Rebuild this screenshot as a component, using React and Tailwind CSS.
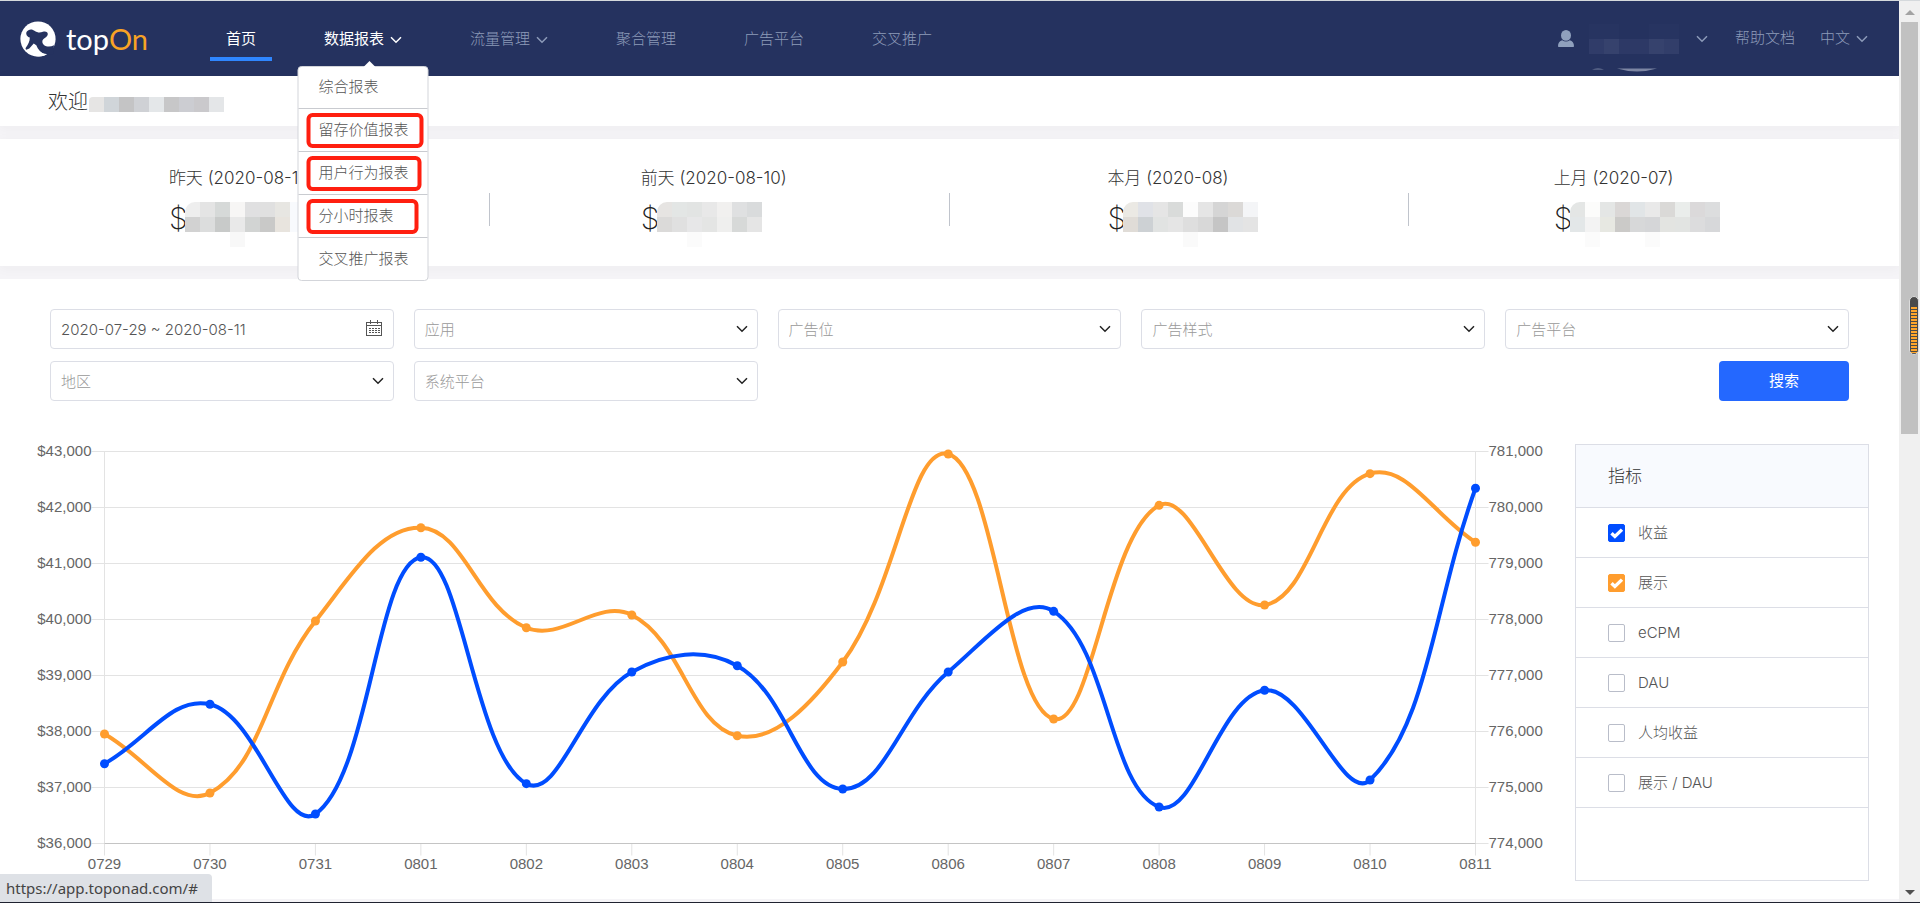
import { useLayoutEffect, useRef, useState } from "react";
import clsx from "clsx";

const navItems = [
  { label: "首页", active: true },
  { label: "数据报表", open: true, arrow: true },
  { label: "流量管理", arrow: true },
  { label: "聚合管理" },
  { label: "广告平台" },
  { label: "交叉推广" },
];

const reportMenu = [
  { label: "综合报表" },
  { label: "留存价值报表", mark: "w-[117px]" },
  { label: "用户行为报表", mark: "w-[115px]" },
  { label: "分小时报表", mark: "w-[112px]" },
  { label: "交叉推广报表" },
];

const summary = [
  {
    label: "昨天 (2020-08-11)",
    width: "w-[182px]",
    cells: [
      ["#eeeeee", "#e4e4e4", "#d6d9d8", "#f7f6f5", "#e0e0e1", "#e0e0e0", "#e7e6e2", "#f8fafd"],
      ["#d2d2d2", "#dcdddd", "#c8cac9", "#e9e9e9", "#d2d4d3", "#c9c9c8", "#e8e4de", "#f8fafd"],
      [null, null, null, "#f8f8f8"],
    ],
  },
  {
    label: "前天 (2020-08-10)",
    width: "w-[158px]",
    cells: [
      ["#e6e4e2", "#e3e6e5", "#e2e4e3", "#e8e8e8", "#f1f0ef", "#dfe0e1", "#d9dbdc"],
      ["#dbdad9", "#e0e0e0", "#e7e7e8", "#e4e5e4", "#efefee", "#d7d9d8", "#e5e5e5"],
      [null, null, "#fbfbfb"],
    ],
  },
  {
    label: "本月 (2020-08)",
    width: "w-[144px]",
    cells: [
      ["#ebe9e4", "#e0e2e7", "#e5e5e5", "#d9dbda", "#fcfcfc", "#e5e5e5", "#d5d5d5", "#dbd9d7", "#f4f5f7"],
      ["#e0dcd7", "#cdd1d4", "#e1e3e2", "#e5e5e5", "#dedede", "#d8d8d8", "#c5c5c5", "#e1e3e5", "#e4e4e4"],
      [null, null, null, null, "#fafafa"],
    ],
  },
  {
    label: "上月 (2020-07)",
    width: "w-[171px]",
    cells: [
      ["#e4e6e5", "#fcfcfb", "#e4e6e5", "#dad7d6", "#e1e5e7", "#e9e9e9", "#dad9d7", "#eaedeb", "#dbd9da", "#dcddde"],
      ["#e3e7e8", "#f3f3f3", "#e7e8e2", "#cbcac8", "#d7d8d9", "#d5d6d8", "#e3e4e1", "#e2e4e2", "#dcdcdd", "#d7d8da"],
      [null, "#fbfbfb", null, null, null, "#fbfbfb"],
    ],
  },
];

const metrics = [
  { label: "收益", checked: true, color: "bg-[#004dff] border-[#004dff]" },
  { label: "展示", checked: true, color: "bg-[#ff9d2e] border-[#ff9d2e]" },
  { label: "eCPM" },
  { label: "DAU" },
  { label: "人均收益" },
  { label: "展示 / DAU" },
];

const days = [
  "0729", "0730", "0731", "0801", "0802", "0803", "0804",
  "0805", "0806", "0807", "0808", "0809", "0810", "0811",
];
const revenue = [37425, 38486, 36527, 41111, 37068, 39063, 39175, 36973, 39063, 40146, 36652, 38736, 37134, 42343];
const impressions = [
  775955, 774902, 777973, 779639, 777853, 778080, 775925,
  777241, 780955, 776223, 780039, 778259, 780604, 779379,
];

const Chevron = ({ className }) => (
  <svg viewBox="0 0 12 8" className={clsx("h-2 w-3 fill-none stroke-current", className)} strokeWidth="1.5">
    <path d="M1 1.2 6 6.2 11 1.2" />
  </svg>
);

const Logo = () => (
  <a href="#" aria-label="topOn" className="flex items-center gap-2.5">
    <svg viewBox="0 0 36 36" className="size-9">
      <circle cx="18" cy="18" r="17.6" fill="#fff" />
      <path
        d="M6.500 11c1.800-3 5.600-3.400 8.400-1 2.600 1.800 5.200 1.800 8 .8 2.800-.8 5 .2 4.900 2.400-.2 2.200-2.600 3.600-4.300 4.700-1.800 1.500-1.500 4.200.4 6 2.400 2 6.400 2.400 10.100.4L33 33l-7.500.6c-4.200-1.800-7.800-5-9.200-9.400l-2.600-1.800-4.400 5.200-3 1.200c-.8-.6-.9-1.300-.5-2 2.400-3.300 4.100-6.600 4-10.200C7.200 15.800 5.600 13.400 6.500 11Z"
        fill="#25325f"
      />
      <path d="M16.500 27c2.300 4 5.800 6.200 10.500 6-4 3-9.500 3-13.500 1.500Z" fill="#fff" />
    </svg>
    <span className="font-[Lato] text-[29px] font-normal leading-9 text-white">
      top<span className="text-[#f7a325]">On</span>
    </span>
  </a>
);

const Mosaic = ({ cells, size = 15, radius = 10 }) => {
  const cols = Math.max(...cells.map((row) => row.length));
  return (
    <svg
      width={cols * size}
      height={cells.length * size}
      className="shrink-0"
      shapeRendering="crispEdges"
      aria-hidden="true"
      style={{ borderTopLeftRadius: radius }}
    >
      {cells.map((row, y) =>
        row.map((fill, x) =>
          fill ? <rect key={`${x}-${y}`} x={x * size} y={y * size} width={size} height={size} fill={fill} /> : null
        )
      )}
    </svg>
  );
};

const ReportMenu = () => (
  <div className="absolute left-1/2 top-full z-20 mt-[5px] w-[131px] -translate-x-1/2 rounded border border-[#d3d5da] bg-white">
    <svg viewBox="0 0 12 6" className="absolute -top-1.5 left-1/2 h-1.5 w-3 fill-white">
      <path d="M0 6 6 0l6 6Z" />
    </svg>
    <ul>
      {reportMenu.map((item, i) => (
        <li
          key={item.label}
          className={clsx(
            "flex items-center px-2",
            i === 0 ? "h-[41px]" : "h-[43px] border-t border-[#c9cbd0]"
          )}
        >
          <a
            href="#"
            className={clsx(
              "flex h-[35px] shrink-0 items-center whitespace-nowrap rounded-md border-4 px-2 text-[15px] text-[#555]",
              item.mark ? item.mark : "w-full",
              item.mark ? "border-[#ff1f10]" : "border-transparent"
            )}
          >
            {item.label}
          </a>
        </li>
      ))}
    </ul>
  </div>
);

const Header = () => (
  <header className="flex h-[75px] items-center bg-[#25325f] pl-5 text-[15px] text-[#8d9bb9]">
    <Logo />
    <nav className="ml-[62px] flex gap-9">
      {navItems.map((item) => (
        <div key={item.label} className="relative">
          <a
            href="#"
            className={clsx(
              "flex h-[45px] items-center whitespace-nowrap border-b-4 px-4 pt-1.5",
              item.active ? "border-[#2f86ff]" : "border-transparent",
              (item.active || item.open) && "font-normal text-white"
            )}
          >
            {item.label}
            {item.arrow && <Chevron className="ml-1.5" />}
          </a>
          {item.open && <ReportMenu />}
        </div>
      ))}
    </nav>
    <div className="ml-auto flex items-center pr-[31px]">
      <svg viewBox="0 0 16 17" className="mr-[15px] h-[17px] w-4 fill-[#8fa0bd]">
        <ellipse cx="8" cy="5.400" rx="5" ry="5.400" />
        <path d="M4.200 10.200c2.300 1.700 5.300 1.700 7.600 0 2.600.6 4.200 2.800 4.200 6 0 .5-.3.8-.8.8H.8c-.5 0-.8-.3-.8-.8 0-3.200 1.600-5.400 4.200-6Z" />
      </svg>
      <button type="button" aria-label="账号" className="relative flex items-center gap-[17px]">
        <Mosaic
          radius={0}
          cells={[
            ["#273461", "#273461", "#25325f", "#25325f", "#273461", "#273461"],
            ["#303c69", "#36426d", "#2d3966", "#2d3966", "#36426d", "#323e6a"],
          ]}
        />
        <svg viewBox="0 0 90 4" className="absolute left-0 top-11 h-1 w-[90px] fill-[#7d86a3]">
          <path d="M3 1.500q6-2 12 0ZM28 .5q20 6 40 0Z" />
        </svg>
        <Chevron />
      </button>
      <a href="#" className="ml-[27px]">帮助文档</a>
      <button type="button" className="ml-[25px] flex items-center gap-1.5">
        中文 <Chevron />
      </button>
    </div>
  </header>
);

const Summary = () => (
  <section className="grid grid-cols-4 bg-white px-[30px] py-[25px] shadow-[0_2px_12px_rgba(40,40,60,0.04)]">
    {summary.map((item, i) => (
      <div key={item.label} className="relative flex h-[77px] justify-center">
        <div className={item.width}>
          <p className="whitespace-nowrap text-[17px] leading-7 text-[#333]">{item.label}</p>
          <div className="mt-2.5 flex h-9 items-start text-[30px] font-extralight leading-8 text-[#222]">
            <span className="w-4">$</span>
            <Mosaic cells={item.cells} />
          </div>
        </div>
        {i < 3 && <span className="absolute right-0 top-[29px] h-[33px] w-px bg-[#c0c4cc]" />}
      </div>
    ))}
  </section>
);

const FilterSelect = ({ label }) => (
  <div className="relative">
    <select
      aria-label={label}
      className="h-10 w-full appearance-none rounded border border-[#dcdee6] bg-white px-2.5 pt-0.5 text-[15px] text-[#999]"
    >
      <option>{label}</option>
    </select>
    <Chevron className="pointer-events-none absolute right-2.5 top-4 text-[#222]" />
  </div>
);

const CalendarIcon = () => (
  <svg
    viewBox="0 0 16 16"
    className="pointer-events-none absolute right-3 top-[11px] size-4 fill-none stroke-[#555]"
    shapeRendering="crispEdges"
  >
    <path d="M.5 2.500h15v13H.5ZM.5 5.500h15M4.500 0v4M11.500 0v4" />
    <path d="M3 8.500h11M3 10.500h11M3 12.500h11" strokeDasharray="2 1" />
  </svg>
);

const Filters = () => (
  <form className="grid grid-cols-5 gap-x-5 gap-y-3 px-5" onSubmit={(e) => e.preventDefault()}>
    <div className="relative">
      <input
        aria-label="日期"
        defaultValue="2020-07-29 ~ 2020-08-11"
        className="h-10 w-full rounded border border-[#dcdee6] px-2.5 text-[15px] text-[#555]"
      />
      <CalendarIcon />
    </div>
    {["应用", "广告位", "广告样式", "广告平台", "地区", "系统平台"].map((label) => (
      <FilterSelect key={label} label={label} />
    ))}
    <button
      type="submit"
      className="col-start-5 h-10 w-[130px] justify-self-end rounded bg-[#2468ff] text-[15px] font-normal text-white"
    >
      搜索
    </button>
  </form>
);

// spline through the points, control points weighted by segment length
const splinePath = (pts, tension = 0.4) => {
  const ctrl = pts.map((p, i) => {
    const prev = pts[i - 1] || p;
    const next = pts[i + 1] || p;
    const d01 = Math.hypot(p.x - prev.x, p.y - prev.y);
    const d12 = Math.hypot(next.x - p.x, next.y - p.y);
    const fa = (tension * d01) / (d01 + d12);
    const fb = (tension * d12) / (d01 + d12);
    return {
      inX: p.x - fa * (next.x - prev.x),
      inY: p.y - fa * (next.y - prev.y),
      outX: p.x + fb * (next.x - prev.x),
      outY: p.y + fb * (next.y - prev.y),
    };
  });
  return pts
    .map((p, i) => {
      if (i === 0) return `M${p.x} ${p.y}`;
      const a = ctrl[i - 1];
      const b = ctrl[i];
      return `C${a.outX} ${a.outY} ${b.inX} ${b.inY} ${p.x} ${p.y}`;
    })
    .join("");
};

const Chart = () => {
  const boxRef = useRef(null);
  const [width, setWidth] = useState(1515);

  useLayoutEffect(() => {
    const measure = () => setWidth(boxRef.current.clientWidth);
    measure();
    window.addEventListener("resize", measure);
    return () => window.removeEventListener("resize", measure);
  }, []);

  const left = 74.5;
  const right = width - 69.5;
  const top = 19.5;
  const bottom = 411.5;
  const stepX = (right - left) / (days.length - 1);
  const toPoints = (values, min) =>
    values.map((v, i) => ({ x: left + i * stepX, y: bottom - ((v - min) / 7000) * (bottom - top) }));

  const series = [
    { color: "#ff9d2e", pts: toPoints(impressions, 774000) },
    { color: "#004dff", pts: toPoints(revenue, 36000) },
  ];

  return (
    <div ref={boxRef} className="min-w-0 flex-1">
      <svg
        width={width}
        height="449"
        className="block font-['Liberation_Sans',Arial,sans-serif] text-[15px] font-normal"
      >
        <g stroke="#e3e3e3">
          {[0, 1, 2, 3, 4, 5, 6, 7].map((i) => (
            <line key={i} x1={left - 13} x2={right + 13} y1={top + i * 56} y2={top + i * 56} />
          ))}
          {days.map((day, i) => (
            <line key={day} x1={left + i * stepX} x2={left + i * stepX} y1={bottom} y2={bottom + 12} />
          ))}
          <line x1={left} x2={left} y1={top} y2={bottom} />
          <line x1={right} x2={right} y1={top} y2={bottom} />
          <line x1={left} x2={right} y1={bottom} y2={bottom} stroke="#c4c4c4" />
        </g>
        <g fill="#666">
          {[0, 1, 2, 3, 4, 5, 6, 7].map((i) => (
            <text key={i} x={left - 13} y={top + i * 56 + 4} textAnchor="end">
              {`$${43 - i},000`}
            </text>
          ))}
          {[0, 1, 2, 3, 4, 5, 6, 7].map((i) => (
            <text key={i} x={right + 13} y={top + i * 56 + 4}>
              {`${781 - i},000`}
            </text>
          ))}
          {days.map((day, i) => (
            <text key={day} x={left + i * stepX} y={bottom + 25} textAnchor="middle">
              {day}
            </text>
          ))}
        </g>
        {series.map((s) => (
          <g key={s.color}>
            <path d={splinePath(s.pts)} fill="none" stroke={s.color} strokeWidth="4" />
            {s.pts.map((p) => (
              <circle key={p.x} cx={p.x} cy={p.y} r="4.500" fill={s.color} />
            ))}
          </g>
        ))}
      </svg>
    </div>
  );
};

const MetricPanel = () => (
  <aside className="mt-3 h-[437px] w-[294px] shrink-0 border border-[#dcdee6]">
    <h2 className="flex h-[63px] items-center border-b border-[#dcdee6] bg-[#f8fafe] px-8 pt-0.5 text-[17px] text-[#333]">
      指标
    </h2>
    {metrics.map((m) => (
      <label
        key={m.label}
        className="flex h-[50px] items-center gap-[13px] border-b border-[#dcdee6] px-8 text-[15px] text-[#555]"
      >
        <span className="relative flex">
          <input
            type="checkbox"
            defaultChecked={m.checked}
            className={clsx(
              "h-[18px] w-[17px] appearance-none rounded-[2px] border",
              m.checked ? m.color : "border-[#b9bdc9] bg-white"
            )}
          />
          {m.checked && (
            <svg
              viewBox="0 0 17 18"
              className="pointer-events-none absolute inset-0 h-[18px] w-[17px] fill-none stroke-white"
              strokeWidth="3.4"
            >
              <path d="m3.500 9.200 3.400 3.300L14 5.600" />
            </svg>
          )}
        </span>
        <span className="pt-0.5">{m.label}</span>
      </label>
    ))}
  </aside>
);

const Scrollbar = () => (
  <div className="relative flex w-[21px] shrink-0 flex-col items-center bg-[#f0f0f0]">
    <svg viewBox="0 0 10 5" className="mt-[9px] h-[5px] w-[10px] fill-[#a3a3a3]">
      <path d="M0 5 5 0l5 5Z" />
    </svg>
    <div className="mt-[7px] h-[412px] w-[17px] bg-[#c1c1c1]" />
    <svg viewBox="0 0 10 5" className="mb-[7px] mt-auto h-[5px] w-[10px] fill-[#505050]">
      <path d="m0 0 5 5 5-5Z" />
    </svg>
    <svg viewBox="0 0 10 60" className="absolute right-px top-[295px] h-[60px] w-[10px]">
      <rect x=".5" y=".5" width="9" height="58" rx="4.500" fill="#4a4a4a" stroke="#dcdcdc" />
      <path d="M5 11v46" stroke="#ffa62b" strokeWidth="6" strokeDasharray="2 1" />
    </svg>
  </div>
);

export default function App() {
  return (
    <div className="flex h-screen flex-col overflow-hidden border-b border-b-[#1f2230] border-t border-t-[#d5d9dc] bg-[#f0f0f0] font-[Inter,'Noto_Sans_CJK_SC',sans-serif] font-light">
      <div className="flex min-h-0 flex-1">
        <div className="flex min-w-0 flex-1 flex-col bg-[#f5f4f7] pb-[3px]">
          <Header />
          <div className="flex h-[50px] shrink-0 items-center bg-white pl-12 pt-0.5 text-xl text-[#333] shadow-[0_2px_12px_rgba(40,40,60,0.04)]">
            欢迎
            <div className="ml-px mt-1">
              <Mosaic
                radius={4}
                cells={[["#e6e5e4", "#d0d5d9", "#c4c4c5", "#cfd1d5", "#e4e7e9", "#c7c7c8", "#cccdd2", "#cac9cc", "#e4e6e8"]]}
              />
            </div>
          </div>
          <div className="my-[13px]">
            <Summary />
          </div>
          <section className="min-h-0 flex-1 overflow-hidden bg-white px-[30px] pt-[30px]">
            <Filters />
            <div className="mt-[31px] flex gap-[30px]">
              <Chart />
              <MetricPanel />
            </div>
          </section>
        </div>
        <Scrollbar />
      </div>
      <div className="fixed bottom-px left-0 flex h-7 items-center rounded-tr bg-[#dee1e6] pl-1.5 pr-3.5 font-['Noto_Sans',sans-serif] text-[15px] font-normal text-[#444]">
        https://app.toponad.com/#
      </div>
    </div>
  );
}
